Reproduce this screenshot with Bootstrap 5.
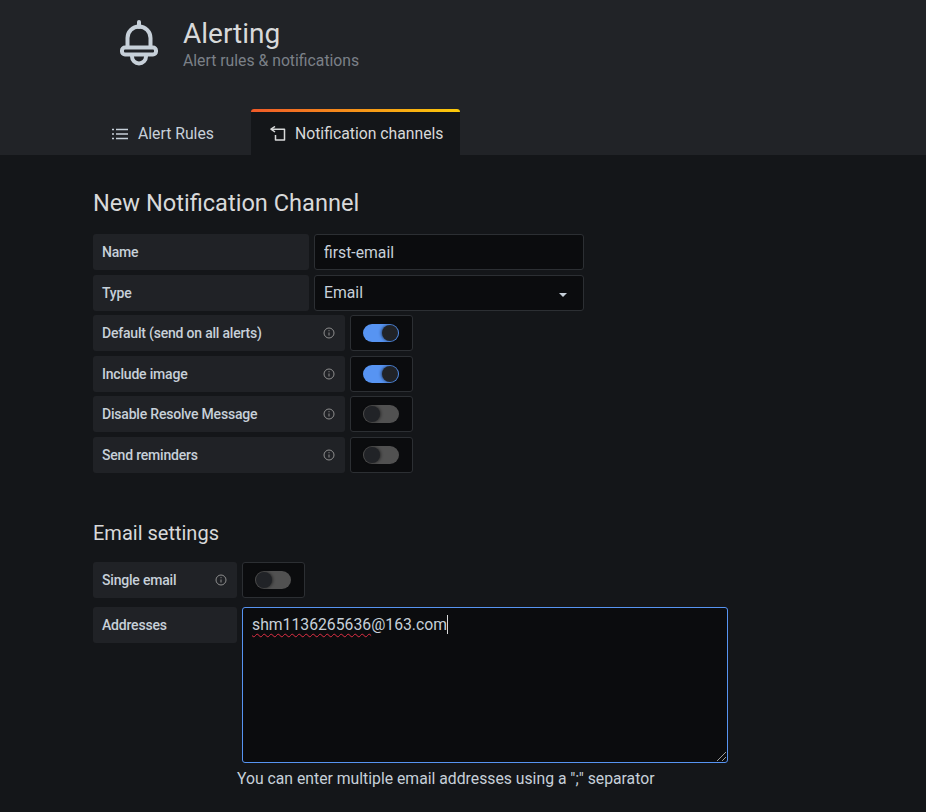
<!DOCTYPE html>
<html lang="en">
<head>
  <meta charset="UTF-8" />
  <meta name="viewport" content="width=device-width, initial-scale=1" />
  <title>Alerting</title>
  <link href="https://cdn.jsdelivr.net/npm/bootstrap@5.3.0/dist/css/bootstrap.min.css" rel="stylesheet">
  <style>
    body {
      background: #141619;
      color: #c7d0d9;
      font-family: Roboto, "Liberation Sans", sans-serif;
      font-size: 15.75px;
    }
    .page-head {
      background: #212327;
      height: 155px;
      padding-left: 93px;
    }
    .head-top {
      height: 109px;
      padding: 20px 0 0 27px;
    }
    .bell-icon {
      width: 38px;
      height: 46px;
      margin-right: 25px;
      color: #c7d0d9;
    }
    .head-title {
      font-size: 28px;
      font-weight: 400;
      line-height: 28px;
      margin: 0;
      color: #d8d9da;
    }
    .head-sub {
      color: #7b8087;
      line-height: 20px;
      margin-top: 3px;
    }
    .tab-item {
      height: 46px;
      color: #c7d0d9;
      gap: 9px;
    }
    .tab-rules {
      width: 158px;
      padding: 3px 0 0 19px;
    }
    .tab-active {
      width: 209px;
      padding: 3px 0 0 19px;
      background: #141619;
      border-radius: 3px 3px 0 0;
      color: #d8d9da;
      position: relative;
    }
    .tab-active::before {
      content: "";
      position: absolute;
      top: 0;
      left: 0;
      right: 0;
      height: 3px;
      border-radius: 3px 3px 0 0;
      background: linear-gradient(90deg, #f05a28, #fbca0a);
    }
    .page-body {
      padding: 33px 0 0 93px;
    }
    .page-title {
      font-size: 23.6px;
      font-weight: 400;
      line-height: 30px;
      margin: 0 0 16px;
      color: #d8d9da;
    }
    .sub-title {
      font-size: 20px;
      font-weight: 400;
      line-height: 26px;
      margin: 47px 0 16px;
      color: #d8d9da;
    }
    .form-line {
      display: flex;
      gap: 5px;
      margin-bottom: 5px;
    }
    .form-line.tight {
      margin-bottom: 4px;
    }
    .form-line.email-gap {
      margin-bottom: 9px;
    }
    .field-label {
      height: 36px;
      background: #202226;
      border-radius: 3px;
      padding: 0 9px;
      font-size: 14px;
      letter-spacing: -.2px;
      font-weight: 500;
      color: #c7d0d9;
      display: flex;
      align-items: center;
      justify-content: space-between;
    }
    .w-short { width: 216px; }
    .w-long { width: 252px; }
    .w-email { width: 144px; }
    .info-icon {
      width: 12px;
      height: 12px;
      margin-right: 1px;
      color: #8e8e8e;
    }
    .gf-input.form-control,
    .gf-select {
      width: 270px;
      height: 36px;
      background: #0b0c0e;
      border: 1px solid #2c2f33;
      border-radius: 3px;
      color: #c7d0d9;
      font-size: 15.75px;
      padding: 0 9px;
      box-shadow: none;
    }
    .gf-select {
      display: flex;
      align-items: center;
      justify-content: space-between;
    }
    .select-caret {
      width: 0;
      height: 0;
      margin: 4px 7px 0 0;
      border-left: 4px solid transparent;
      border-right: 4px solid transparent;
      border-top: 4px solid #c7d0d9;
    }
    .toggle-box {
      width: 63px;
      height: 36px;
      background: #0b0c0e;
      border: 1px solid #2c2f33;
      border-radius: 3px;
      display: flex;
      align-items: center;
      justify-content: center;
      padding-right: 1px;
    }
    .toggle-track {
      width: 36px;
      height: 18px;
      border-radius: 9px;
      background: #515151;
      position: relative;
    }
    .toggle-track::after {
      content: "";
      position: absolute;
      top: 1px;
      left: 1px;
      width: 16px;
      height: 16px;
      border-radius: 50%;
      background: #212327;
      box-shadow: 1px 0 3px rgba(0, 0, 0, .5);
    }
    .toggle-track.is-on {
      background: #5794f2;
    }
    .toggle-track.is-on::after {
      left: 19px;
      box-shadow: -1px 0 3px rgba(0, 0, 0, .5);
    }
    .addr-box {
      width: 486px;
      height: 156px;
      background: #0b0c0e;
      border: 1px solid #5794f2;
      border-radius: 3px;
      padding: 5px 9px;
      font-size: 15.75px;
      line-height: 24px;
      color: #c7d0d9;
      position: relative;
    }
    .spell-word {
      text-decoration: underline wavy #e02f44 1px;
      text-underline-offset: 3px;
    }
    .text-caret {
      display: inline-block;
      width: 1px;
      height: 19px;
      background: #d8d9da;
      vertical-align: -4px;
    }
    .resize-grip {
      position: absolute;
      right: 0;
      bottom: 0;
      width: 11px;
      height: 11px;
      color: #9a9a9a;
    }
    .addr-hint {
      margin: 4px 0 0 144px;
      line-height: 24px;
      color: #c7d0d9;
    }
  </style>
</head>
<body>
  <div class="page-head">
    <div class="head-top d-flex">
      <svg class="bell-icon" viewBox="0 0 38 46" fill="none" stroke="currentColor" stroke-width="4" stroke-linejoin="round" stroke-linecap="round">
        <path d="M19 2v5"/>
        <path d="M7.500 27V18a11.500 11.500 0 0 1 23 0v9"/>
        <path d="M5 27.500h28a3 3 0 0 1 3 3v1a3 3 0 0 1-3 3H5a3 3 0 0 1-3-3v-1a3 3 0 0 1 3-3z"/>
        <path d="M12 36.500a7 7 0 0 0 14 0"/>
      </svg>
      <div>
        <h1 class="head-title">Alerting</h1>
        <div class="head-sub">Alert rules &amp; notifications</div>
      </div>
    </div>
    <div class="d-flex">
      <div class="tab-item tab-rules d-flex align-items-center">
        <svg width="17" height="12" viewBox="0 0 17 12" fill="none" stroke="currentColor" stroke-width="1.6">
          <path d="M0 1.500h2M4 1.500h12M0 6h2M4 6h12M0 10.500h2M4 10.500h12"/>
        </svg>
        <span>Alert Rules</span>
      </div>
      <div class="tab-item tab-active d-flex align-items-center">
        <svg width="16" height="15" viewBox="0 0 16 15" fill="none" stroke="currentColor" stroke-width="1.5" stroke-linejoin="round">
          <path d="M1 3.200h13.500v10.800H5.500V9"/>
          <path d="M5 .5L1 3.200 5 6" />
        </svg>
        <span>Notification channels</span>
      </div>
    </div>
  </div>

  <div class="page-body">
    <h2 class="page-title">New Notification Channel</h2>

    <div class="form-line">
      <div class="field-label w-short">Name</div>
      <input class="gf-input form-control" type="text" value="first-email">
    </div>
    <div class="form-line tight">
      <div class="field-label w-short">Type</div>
      <div class="gf-select"><span>Email</span><span class="select-caret"></span></div>
    </div>
    <div class="form-line">
      <div class="field-label w-long">Default (send on all alerts)
        <svg class="info-icon" viewBox="0 0 12 12" fill="none" stroke="currentColor"><circle cx="6" cy="6" r="5"/><path d="M6 5.500v3M6 3.200v1"/></svg>
      </div>
      <div class="toggle-box"><span class="toggle-track is-on"></span></div>
    </div>
    <div class="form-line tight">
      <div class="field-label w-long">Include image
        <svg class="info-icon" viewBox="0 0 12 12" fill="none" stroke="currentColor"><circle cx="6" cy="6" r="5"/><path d="M6 5.500v3M6 3.200v1"/></svg>
      </div>
      <div class="toggle-box"><span class="toggle-track is-on"></span></div>
    </div>
    <div class="form-line">
      <div class="field-label w-long">Disable Resolve Message
        <svg class="info-icon" viewBox="0 0 12 12" fill="none" stroke="currentColor"><circle cx="6" cy="6" r="5"/><path d="M6 5.500v3M6 3.200v1"/></svg>
      </div>
      <div class="toggle-box"><span class="toggle-track"></span></div>
    </div>
    <div class="form-line">
      <div class="field-label w-long">Send reminders
        <svg class="info-icon" viewBox="0 0 12 12" fill="none" stroke="currentColor"><circle cx="6" cy="6" r="5"/><path d="M6 5.500v3M6 3.200v1"/></svg>
      </div>
      <div class="toggle-box"><span class="toggle-track"></span></div>
    </div>

    <h3 class="sub-title">Email settings</h3>

    <div class="form-line email-gap">
      <div class="field-label w-email">Single email
        <svg class="info-icon" viewBox="0 0 12 12" fill="none" stroke="currentColor"><circle cx="6" cy="6" r="5"/><path d="M6 5.500v3M6 3.200v1"/></svg>
      </div>
      <div class="toggle-box"><span class="toggle-track"></span></div>
    </div>
    <div class="form-line mb-0">
      <div class="field-label w-email">Addresses</div>
      <div class="addr-box">
        <span class="spell-word">shm1136265636</span>@163.com<span class="text-caret"></span>
        <svg class="resize-grip" viewBox="0 0 11 11" fill="none" stroke="currentColor" stroke-width="1"><path d="M1 10l9-9M6 10l4-4"/></svg>
      </div>
    </div>
    <div class="addr-hint">You can enter multiple email addresses using a ";" separator</div>
  </div>

  <script src="https://cdn.jsdelivr.net/npm/bootstrap@5.3.0/dist/js/bootstrap.bundle.min.js"></script>
</body>
</html>
